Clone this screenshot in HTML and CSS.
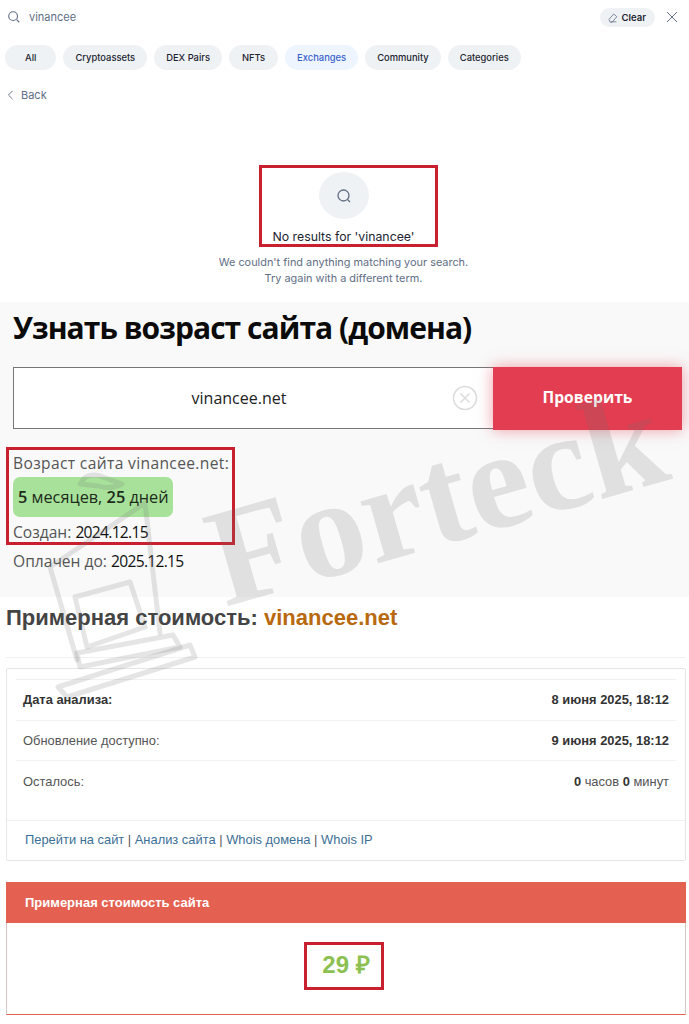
FILE: index.html
```html
<!DOCTYPE html>
<html lang="en">
<head>
    <meta charset="UTF-8">
    <meta name="viewport" content="width=device-width, initial-scale=1.0">
    <title>vinancee</title>
    <link rel="stylesheet" href="styles.css">
</head>
<body>
    <!-- Search popup -->
    <section class="search-panel">
        <div class="search-row">
            <svg class="search-icon" viewBox="0 0 16 16" width="14" height="14">
                <circle cx="7" cy="7" r="5"></circle>
                <path d="M11 11l3 3"></path>
            </svg>
            <span class="search-value">vinancee</span>
            <button class="clear-btn">
                <svg viewBox="0 0 14 14" width="11" height="11">
                    <path d="M5 12.5h7M2.5 9.5l6-7 4 3.5-6 7H4z"></path>
                </svg>
                Clear
            </button>
            <svg class="close-icon" viewBox="0 0 12 12" width="12" height="12">
                <path d="M1 1l10 10M11 1L1 11"></path>
            </svg>
        </div>
        <div class="tabs">
            <span class="tab">All</span>
            <span class="tab">Cryptoassets</span>
            <span class="tab">DEX Pairs</span>
            <span class="tab">NFTs</span>
            <span class="tab active">Exchanges</span>
            <span class="tab">Community</span>
            <span class="tab">Categories</span>
        </div>
        <div class="back">
            <svg viewBox="0 0 8 12" width="7" height="10">
                <path d="M6.5 1L1.5 6l5 5"></path>
            </svg>
            Back
        </div>
        <div class="no-results">
            <div class="marked no-results-box">
                <div class="round-icon">
                    <svg viewBox="0 0 16 16" width="16" height="16">
                        <circle cx="7.5" cy="7.5" r="5.5"></circle>
                        <path d="M11.5 11.5l2.5 2.5"></path>
                    </svg>
                </div>
                <div class="no-results-title">No results for 'vinancee'</div>
            </div>
            <p class="no-results-text">We couldn't find anything matching your search.<br>Try again with a different term.</p>
        </div>
    </section>

    <!-- Domain age -->
    <section class="age-panel">
        <h1>Узнать возраст сайта (домена)</h1>
        <div class="check-form">
            <div class="check-input">
                <span class="check-value">vinancee.net</span>
                <svg class="input-clear" viewBox="0 0 26 26" width="26" height="26">
                    <circle cx="13" cy="13" r="11.5"></circle>
                    <path d="M8.5 8.5l9 9M17.5 8.5l-9 9"></path>
                </svg>
            </div>
            <button class="check-btn">Проверить</button>
        </div>
        <div class="marked age-box">
            <div class="age-line age-title">Возраст сайта vinancee.net:</div>
            <div class="age-badge"><b>5</b> месяцев, <b>25</b> дней</div>
            <div class="age-line">Создан: <b>2024.12.15</b></div>
        </div>
        <div class="age-line paid">Оплачен до: <b>2025.12.15</b></div>
    </section>

    <!-- Estimated price -->
    <section class="price-panel">
        <h2>Примерная стоимость: <span class="domain">vinancee.net</span></h2>
        <hr class="price-line">
        <div class="info-card">
            <div class="info-rows">
                <div class="info-row"><b>Дата анализа:</b><b>8 июня 2025, 18:12</b></div>
                <div class="info-row">Обновление доступно:<b>9 июня 2025, 18:12</b></div>
                <div class="info-row">Осталось:<span><b>0</b> часов <b>0</b> минут</span></div>
            </div>
            <div class="info-links">
                <a>Перейти на сайт</a> | <a>Анализ сайта</a> | <a>Whois домена</a> | <a>Whois IP</a>
            </div>
        </div>
        <div class="cost-card">
            <div class="cost-head">Примерная стоимость сайта</div>
            <div class="cost-body">
                <div class="marked cost-box">29 ₽</div>
            </div>
        </div>
    </section>

    <!-- Watermark -->
    <div class="watermark">
        <svg class="wm-laptop" viewBox="0 0 220 240" width="220" height="240">
            <path d="M47 190L20 97 115 33l15 130"></path>
            <path d="M50 14q6-12 20-8l22 8q-12 6-24 2z"></path>
            <path d="M45 127l55-15 15 45-58 20z"></path>
            <path d="M47 183l96-18 7 12-100 20z"></path>
            <path d="M28 217l132-42 5 12-128 40z"></path>
        </svg>
        <span class="wm-text">Forteck</span>
    </div>
</body>
</html>
```

FILE: styles.css
```css
:root {
    --mark-color: #c8202e;
    --muted: #616e85;
    --pill: #eff2f5;
}

* {
    box-sizing: border-box;
}

body {
    margin: 0;
    background: #fff;
    font-family: Inter, "Noto Sans", sans-serif;
    color: #222;
    position: relative;
    overflow-x: hidden;
}

svg {
    fill: none;
    stroke: currentColor;
}

.marked {
    border: 3px solid var(--mark-color);
}

/* Search popup */
.search-panel {
    height: 302px;
    padding: 0 5px;
}

.search-row {
    display: flex;
    align-items: center;
    height: 34px;
    padding-left: 2px;
    color: #616e85;
}

.search-icon {
    stroke-width: 1.3;
    margin-right: 8px;
}

.search-value {
    font-size: 11px;
    flex: 1;
}

.clear-btn {
    display: flex;
    align-items: center;
    gap: 4px;
    height: 19px;
    padding: 0 9px 0 7px;
    border: 0;
    border-radius: 10px;
    background: var(--pill);
    font: 600 9.5px Inter, sans-serif;
    color: #222531;
    margin-right: 11px;
}

.clear-btn svg {
    color: #616e85;
}

.close-icon {
    margin-right: 6px;
    stroke-width: 1;
}

.tabs {
    display: flex;
    gap: 7px;
    margin-top: 11px;
}

.tab {
    display: flex;
    align-items: center;
    justify-content: center;
    height: 25px;
    padding: 0 12px;
    border-radius: 13px;
    background: var(--pill);
    font-size: 9.4px;
    font-weight: 500;
    color: #222531;
}

.tab:first-child {
    padding: 0 20px;
}

.tab:nth-child(4) {
    padding: 0 13px;
}

.tab.active {
    background: #eff5ff;
    color: #3861c9;
}

.back {
    display: flex;
    align-items: center;
    gap: 7px;
    margin-top: 18px;
    padding-left: 2px;
    font-size: 11px;
    color: #616e85;
}

.back svg {
    stroke-width: 1.1;
}

.no-results {
    display: flex;
    flex-direction: column;
    align-items: center;
    margin-top: 63px;
    margin-right: 2px;
}

.no-results-box {
    width: 179px;
    height: 82px;
    margin-left: 9px;
    padding: 4px 9px 0 0;
    display: flex;
    flex-direction: column;
    align-items: center;
}

.round-icon {
    width: 50px;
    height: 50px;
    border-radius: 50%;
    background: var(--pill);
    display: flex;
    align-items: center;
    justify-content: center;
    color: #616e85;
}

.round-icon svg {
    stroke-width: 1.3;
}

.no-results-title {
    margin-top: 10px;
    font-size: 12.3px;
    font-weight: 400;
    color: #222531;
    white-space: nowrap;
}

.no-results-text {
    margin: 7px 0 0;
    font-size: 10.9px;
    line-height: 16px;
    color: var(--muted);
    text-align: center;
}

/* Domain age */
.age-panel {
    height: 295px;
    padding: 7px 7px 0 13px;
    background: #f9f9f9;
}

h1 {
    margin: 0;
    font-family: "Open Sans", sans-serif;
    font-size: 30px;
    line-height: 38px;
    font-weight: 700;
    color: #0b0b0b;
    letter-spacing: -0.95px;
}

.check-form {
    display: flex;
    margin-top: 20px;
    align-items: flex-start;
}

.check-input {
    width: 480px;
    height: 62px;
    border: 1px solid #777;
    border-right: 0;
    background: #fff;
    display: flex;
    align-items: center;
    position: relative;
}

.check-value {
    flex: 1;
    padding-left: 12px;
    text-align: center;
    font-family: "Open Sans", sans-serif;
    font-size: 16px;
    color: #222;
}

.input-clear {
    margin-right: 15px;
    color: #dcdcdc;
    stroke-width: 1.5;
}

.check-btn {
    width: 189px;
    height: 63px;
    padding: 0 0 3px;
    border: 0;
    background: #e23d50;
    box-shadow: 0 0 14px rgba(226, 61, 80, 0.5);
    color: #fff;
    font-family: "Open Sans", sans-serif;
    font-size: 15.7px;
    font-weight: 700;
    position: relative;
}

.age-box {
    width: 229px;
    height: 98px;
    margin: 17px 0 0 -7px;
    padding: 2px 0 0 4px;
}

.age-line {
    font-family: "Open Sans", sans-serif;
    font-size: 15.6px;
    line-height: 22px;
    color: #555;
    white-space: nowrap;
}

.age-title {
    letter-spacing: 0.35px;
}

.age-line b {
    font-weight: 400;
    color: #111;
    letter-spacing: -0.7px;
}

.age-badge {
    width: 160px;
    height: 40px;
    margin: 3px 0 4px;
    border-radius: 7px;
    background: #a8e29a;
    color: #1d2b1a;
    font-family: "Open Sans", sans-serif;
    font-size: 16.3px;
    line-height: 40px;
    padding-left: 5px;
    white-space: nowrap;
}

.age-badge b {
    font-weight: 600;
}

.paid {
    margin-top: 5px;
}

/* Estimated price */
.price-panel {
    padding: 5px 3px 0 6px;
    font-family: "Liberation Sans", Arial, sans-serif;
}

h2 {
    margin: 0;
    font-size: 22px;
    line-height: 32px;
    font-weight: 700;
    color: #444;
}

.domain {
    color: #b8690f;
}

.price-line {
    margin: 23px 0 10px;
    border: 0;
    border-top: 1px solid #f1f1f1;
}

.info-card {
    height: 193px;
    border: 1px solid #e6e6e6;
    border-radius: 2px;
    padding-top: 10px;
    font-size: 12.9px;
    color: #555;
}

.info-rows {
    height: 141px;
    margin: 0 9px;
    border-top: 1px solid #f0f0f0;
}

.info-row {
    display: flex;
    justify-content: space-between;
    align-items: center;
    height: 40.5px;
    padding: 0 7px;
    border-bottom: 1px solid #f2f2f2;
}

.info-row:nth-child(3) {
    border-bottom: 0;
}

.info-row b {
    color: #333;
}

.info-links {
    height: 40px;
    border-top: 1px solid #f0f0f0;
    padding: 0 0 0 18px;
    line-height: 38px;
    color: #555;
}

.info-links a {
    color: #3d6f96;
}

.cost-card {
    height: 133px;
    margin-top: 21px;
    border: 1px solid #e46050;
    border-top: 0;
    border-color: #d8c4c0 #d8c4c0 #e46050;
}

.cost-head {
    height: 41px;
    margin: 0 -1px;
    padding-left: 19px;
    background: #e46050;
    color: #fff;
    font-size: 13px;
    font-weight: 700;
    line-height: 41px;
}

.cost-body {
    display: flex;
    justify-content: center;
    padding-top: 19px;
    padding-right: 4px;
}

.cost-box {
    width: 80px;
    height: 48px;
    padding-left: 4px;
    text-align: center;
    font-size: 24px;
    font-weight: 700;
    line-height: 40px;
    color: #8cc152;
}

/* Watermark sits over the page */
.watermark {
    position: absolute;
    left: 0;
    top: 0;
    width: 689px;
    height: 720px;
    overflow: hidden;
    pointer-events: none;
}

.wm-text {
    position: absolute;
    left: 225px;
    top: 490px;
    font-family: "Liberation Serif", serif;
    font-weight: 700;
    font-size: 140px;
    line-height: 1;
    color: rgba(110, 110, 110, 0.18);
    transform: rotate(-16deg);
    transform-origin: 0 117px;
    white-space: nowrap;
}

.wm-laptop {
    position: absolute;
    left: 30px;
    top: 470px;
    color: rgba(110, 110, 110, 0.18);
    stroke-width: 5;
    stroke-linejoin: round;
    stroke-linecap: round;
}
```
